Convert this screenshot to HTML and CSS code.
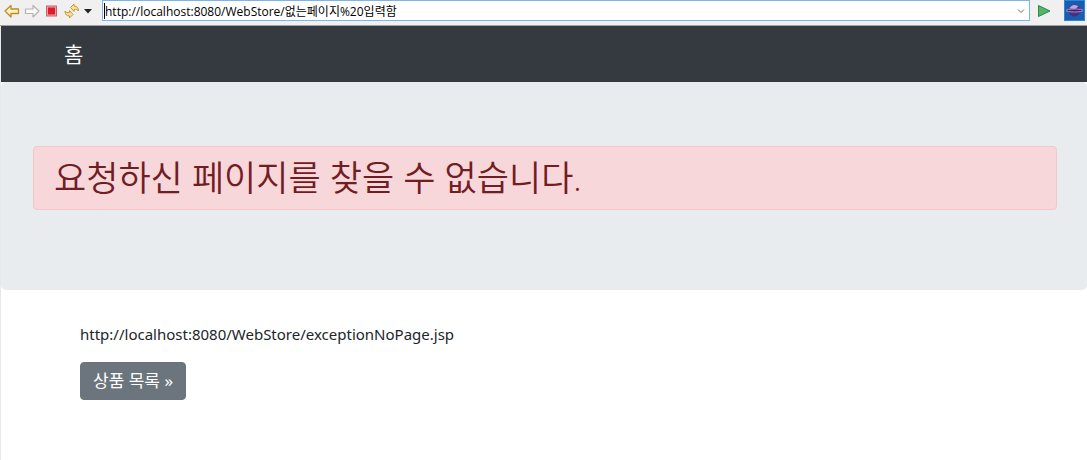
FILE: index.html
```html
<!DOCTYPE html>
<html lang="ko">
<head>
  <meta charset="UTF-8">
  <meta name="viewport" content="width=device-width, initial-scale=1">
  <title>페이지 오류</title>
  <link rel="stylesheet" href="styles.css">
</head>
<body>
  <form class="toolbar">
    <button type="button" class="tool" aria-label="뒤로">
      <svg width="16" height="16" viewBox="0 0 16 16"><path d="M1 8l6-5.5V6h7.5v4.5H7V14z" fill="#fff3c4" stroke="#c08a24" stroke-width="1.3" stroke-linejoin="round"/></svg>
    </button>
    <button type="button" class="tool" aria-label="앞으로">
      <svg width="16" height="16" viewBox="0 0 16 16"><path d="M15 8L9 2.5V6H1.5v4.5H9V14z" fill="#f8f8f8" stroke="#b4b4b4" stroke-width="1.2" stroke-linejoin="round"/></svg>
    </button>
    <button type="button" class="tool" aria-label="중지">
      <svg width="16" height="16" viewBox="0 0 16 16"><rect x="2.500" y="3" width="10" height="10" fill="#f0a0a4" stroke="#d0606a"/><rect x="4" y="4.500" width="7" height="7" fill="#dc1c2c"/></svg>
    </button>
    <button type="button" class="tool" aria-label="새로 고침">
      <svg width="16" height="16" viewBox="0 0 16 16" fill="#fbe29a" stroke="#c89632" stroke-width="1" stroke-linejoin="round"><path d="M6.500 4.500L10 1v2c3 0 4.500 2 4.500 5-1-1.500-2.500-2-4.500-1.500V8.500z"/><path d="M9 11.500L5.500 15v-2c-3 0-4.500-2-4.500-5 1 1.500 2.500 2 4.500 1.500V7.500z"/></svg>
    </button>
    <button type="button" class="tool tool-menu" aria-label="메뉴">
      <svg width="8" height="16" viewBox="0 0 8 16"><path d="M0 6h8L4 10.500z" fill="#222"/></svg>
    </button>
    <div class="address">
      <span class="caret"></span>
      <input type="text" class="address-input" aria-label="주소" value="http://localhost:8080/WebStore/없는페이지%20입력함">
      <svg width="8" height="8" viewBox="0 0 8 8"><path d="M1 2.500l3 3 3-3" fill="none" stroke="#666"/></svg>
    </div>
    <button type="button" class="tool tool-go" aria-label="이동">
      <svg width="16" height="16" viewBox="0 0 16 16"><path d="M2.500 2.500v11L14 8z" fill="#55b46c" stroke="#2f8746" stroke-linejoin="round"/></svg>
    </button>
    <button type="button" class="tool tool-browser" aria-label="브라우저">
      <svg width="21" height="21" viewBox="0 0 21 21">
        <rect width="21" height="21" fill="#2b86d4"/>
        <rect x="1" y="1" width="19" height="19" fill="#1a5cb0"/>
        <circle cx="10.500" cy="10.500" r="6" fill="#44307c"/>
        <path d="M5.500 8.500a5.500 5.500 0 0 1 9-2L11 9z" fill="#b8a6dc"/>
        <ellipse cx="10.500" cy="10.500" rx="8.500" ry="1.500" fill="#3a2468" stroke="#b48cd8"/>
      </svg>
    </button>
  </form>

  <div class="page">
    <nav class="navbar">
      <div class="container">
        <a class="navbar-brand" href="#">홈</a>
      </div>
    </nav>
    <div class="jumbotron">
      <h1 class="alert alert-danger">요청하신 페이지를 찾을 수 없습니다.</h1>
    </div>
    <div class="container content">
      <p>http://localhost:8080/WebStore/exceptionNoPage.jsp</p>
      <p><a href="#" class="btn btn-secondary">상품 목록 &raquo;</a></p>
    </div>
  </div>
</body>
</html>
```

FILE: styles.css
```css
* {
  box-sizing: border-box;
}
body {
  margin: 0;
  font-family: "Noto Sans", "Noto Sans CJK KR", sans-serif;
  font-size: 15px;
  line-height: 24px;
  color: #212529;
  background: #fff;
}

/* browser toolbar */
.toolbar {
  display: flex;
  align-items: center;
  height: 26px;
  padding: 0 2px 4px 4px;
  background: #f0f0f0;
  border-bottom: 1px solid #a0a0a0;
}
.tool {
  display: flex;
  flex: none;
  margin: 0 4px 0 0;
  padding: 0;
  border: 0;
  background: none;
}
.tool-menu {
  margin-right: 10px;
}
.tool-go {
  margin: 0 12px 0 6px;
}
.tool-browser {
  margin: 0;
}
.address {
  display: flex;
  flex: 1;
  align-items: center;
  height: 21px;
  padding: 0 4px 0 1px;
  border: 1px solid #7ab4e8;
  background: #fff;
}
.caret {
  width: 1px;
  height: 16px;
  background: #000;
}
.address-input {
  flex: 1;
  min-width: 0;
  padding: 0;
  border: 0;
  outline: 0;
  font-family: "Open Sans", "Noto Sans CJK KR", sans-serif;
  font-size: 12px;
  color: #000;
  background: none;
}

/* page */
.page {
  min-height: calc(100vh - 26px);
  border-left: 1px solid #e8e8e8;
}
.container {
  width: 100%;
  max-width: 960px;
  margin: 0 auto;
  padding: 0 16px;
}
.navbar {
  padding: 8px 0;
  background: #343a40;
}
.navbar .container {
  padding: 0;
}
.navbar-brand {
  display: inline-block;
  padding: 5px 0;
  font-size: 21px;
  line-height: 30px;
  vertical-align: top;
  color: #fff;
  text-decoration: none;
}
.jumbotron {
  margin-bottom: 32px;
  padding: 64px 30px 80px 32px;
  border-radius: 5px;
  background: #e9ecef;
}
.alert {
  margin: 0;
  padding: 7px 20px;
  border: 1px solid #f5c6cb;
  border-radius: 4px;
}
.alert-danger {
  color: #721c24;
  background: #f8d7da;
}
h1 {
  font-family: "Open Sans", "Noto Sans CJK KR", sans-serif;
  font-size: 35px;
  font-weight: 350;
  line-height: 48px;
}
p {
  margin: 0 0 16px;
}
.btn {
  display: inline-block;
  padding: 6px 12px;
  border: 1px solid transparent;
  border-radius: 4px;
  font-size: 17px;
  text-decoration: none;
}
.btn-secondary {
  color: #fff;
  background: #6c757d;
  border-color: #6c757d;
}
```
